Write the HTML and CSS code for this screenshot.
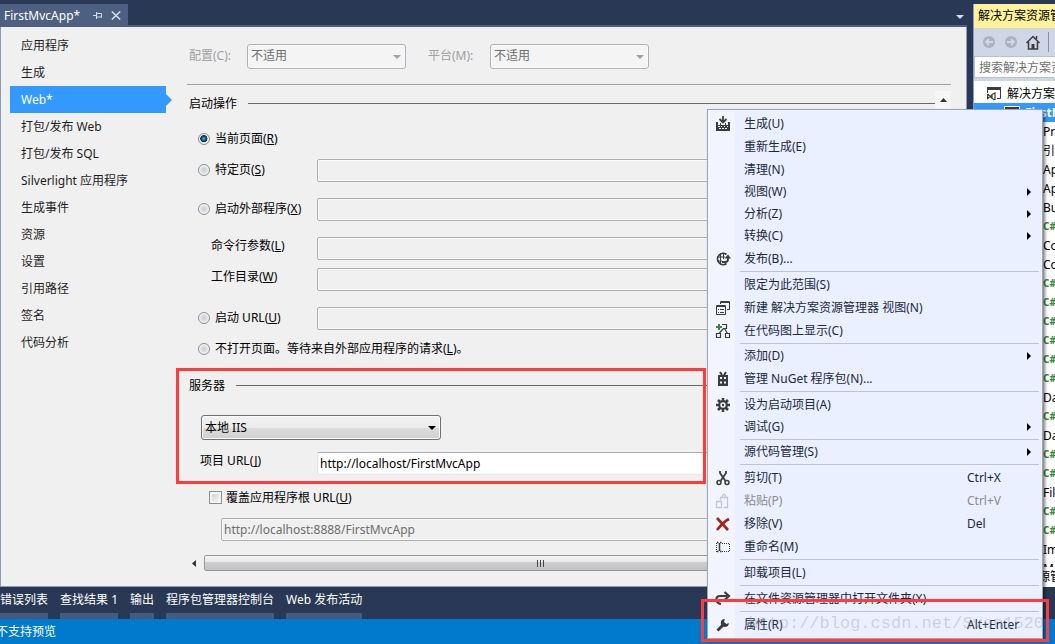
FILE: index.html
```html
<!DOCTYPE html>
<html lang="zh-CN">
<head>
<meta charset="utf-8">
<title>FirstMvcApp</title>
<link rel="stylesheet" href="styles.css">
</head>
<body>
<div class="workspace">
  <main class="document">
    <header class="doc-tabs">
      <div class="doc-tab">
        <span>FirstMvcApp*</span>
        <button class="icon-btn pin" aria-label="固定"><svg width="9" height="7" viewBox="0 0 9 7"><path d="M0 3.500h3M3.500 0v7M4 1.500h4.500v4M4 5h5" fill="none" stroke="#d5dcec"/></svg></button>
        <button class="icon-btn" aria-label="关闭"><svg width="10" height="9" viewBox="0 0 10 9"><path d="M.8.5l8.400 8M9.200.5l-8.400 8" fill="none" stroke="#d5dcec" stroke-width="1.500"/></svg></button>
      </div>
      <button class="icon-btn doc-list" aria-label="文档列表"><svg width="8" height="4" viewBox="0 0 8 4"><path d="M0 0h8L4 4z" fill="#d5dcec"/></svg></button>
    </header>
    <div class="doc-body">
      <nav class="pages">
        <a href="#">应用程序</a>
        <a href="#">生成</a>
        <a href="#" class="current">Web*</a>
        <a href="#">打包/发布 Web</a>
        <a href="#">打包/发布 SQL</a>
        <a href="#">Silverlight 应用程序</a>
        <a href="#">生成事件</a>
        <a href="#">资源</a>
        <a href="#">设置</a>
        <a href="#">引用路径</a>
        <a href="#">签名</a>
        <a href="#">代码分析</a>
      </nav>
      <form class="settings">
        <div class="config">
          <label for="cfg">配置(C):</label>
          <div class="combo off"><select id="cfg" disabled><option>不适用</option></select></div>
          <label for="plat">平台(M):</label>
          <div class="combo off"><select id="plat" disabled><option>不适用</option></select></div>
        </div>
        <div class="scroller">
          <div class="fields">
            <h2>启动操作</h2>
            <div class="row gap-l"><label class="name"><input type="radio" name="start" checked><span>当前页面(<u>R</u>)</span></label></div>
            <div class="row gap-s"><label class="name"><input type="radio" name="start"><span>特定页(<u>S</u>)</span></label><input class="text" disabled aria-label="特定页"></div>
            <div class="row gap-l"><label class="name"><input type="radio" name="start"><span>启动外部程序(<u>X</u>)</span></label><input class="text" disabled aria-label="启动外部程序"></div>
            <div class="row gap-l"><label class="name sub" for="args">命令行参数(<u>L</u>)</label><input class="text" id="args" disabled></div>
            <div class="row gap-s"><label class="name sub" for="dir">工作目录(<u>W</u>)</label><input class="text" id="dir" disabled></div>
            <div class="row gap-l"><label class="name"><input type="radio" name="start"><span>启动 URL(<u>U</u>)</span></label><input class="text" disabled aria-label="启动 URL"></div>
            <div class="row gap-s"><label class="name"><input type="radio" name="start"><span>不打开页面。等待来自外部应用程序的请求(<u>L</u>)。</span></label></div>
            <h2 class="gap-l">服务器</h2>
            <div class="combo server"><select aria-label="服务器"><option>本地 IIS</option></select></div>
            <div class="row gap-m"><label class="name url" for="url">项目 URL(<u>J</u>)</label><input class="text live" id="url" value="http://localhost/FirstMvcApp"></div>
            <div class="row gap-m"><label class="name check"><input type="checkbox"><span>覆盖应用程序根 URL(<u>U</u>)</span></label></div>
            <div class="row gap-s root"><input class="text" disabled value="http://localhost:8888/FirstMvcApp" aria-label="应用程序根 URL"></div>
            <div class="hbar">
              <button type="button" aria-label="向左滚动"><svg width="4" height="7" viewBox="0 0 4 7"><path d="M4 0v7L0 3.500z" fill="#333"/></svg></button>
              <div class="thumb"><i></i><i></i><i></i></div>
            </div>
          </div>
          <div class="vbar"><button type="button" aria-label="向上滚动"><svg width="7" height="4" viewBox="0 0 7 4"><path d="M0 4h7L3.500 0z" fill="#333"/></svg></button></div>
        </div>
      </form>
    </div>
  </main>
  <aside class="explorer">
    <h1>解决方案资源管理器</h1>
    <div class="tools">
      <button class="icon-btn" aria-label="后退"><svg width="14" height="14" viewBox="0 0 14 14"><circle cx="7" cy="7" r="6" fill="#acb1bd"/><path d="M11 7H4M7 4L4 7l3 3" fill="none" stroke="#cfd6e5" stroke-width="1.800"/></svg></button>
      <button class="icon-btn" aria-label="前进"><svg width="14" height="14" viewBox="0 0 14 14"><circle cx="7" cy="7" r="6" fill="#acb1bd"/><path d="M3 7h7M7 4l3 3-3 3" fill="none" stroke="#cfd6e5" stroke-width="1.800"/></svg></button>
      <button class="icon-btn" aria-label="主页"><svg width="14" height="15" viewBox="0 0 14 15"><path d="M.5 8L7 1.500 13.500 8M2.500 7v7h9V7M10.500 4V1" fill="none" stroke="#3c3c3c" stroke-width="1.500"/><path d="M5.500 9h3v5h-3z" fill="#3c3c3c"/></svg></button>
      <span class="divider"></span>
    </div>
    <input class="search" placeholder="搜索解决方案资源管理器" aria-label="搜索解决方案资源管理器">
    <div class="tree">
      <div class="node solution"><svg width="14" height="13" viewBox="0 0 14 13"><path d="M0 0h14v3H0z" fill="#3c3c3c"/><path d="M.5 3v3M13.500 3v8.500H10" fill="none" stroke="#3c3c3c"/><path d="M.6 7v4.500L5 8M.6 7L5 11M5 7.500L8 6v7l-3-1.500z" fill="none" stroke="#3c3c3c" stroke-width="1.200"/></svg><span>解决方案“FirstMvcApp”</span></div>
      <div class="node project"><svg width="16" height="13" viewBox="0 0 16 13"><path d="M.5.5h15v12H.5z" fill="#3c3c3c" stroke="#fff"/></svg><span>FirstMvcApp</span></div>
      <div class="node">Properties</div>
      <div class="node">引用</div>
      <div class="node">App_Data</div>
      <div class="node">App_Start</div>
      <div class="node">BundleConfig</div>
      <div class="node cs">C#</div>
      <div class="node">Content</div>
      <div class="node">Controllers</div>
      <div class="node cs">C#</div>
      <div class="node cs">C#</div>
      <div class="node cs">C#</div>
      <div class="node cs">C#</div>
      <div class="node cs">C#</div>
      <div class="node cs">C#</div>
      <div class="node">Data</div>
      <div class="node cs">C#</div>
      <div class="node">Data</div>
      <div class="node cs">C#</div>
      <div class="node cs">C#</div>
      <div class="node">Filters</div>
      <div class="node cs">C#</div>
      <div class="node cs">C#</div>
      <div class="node">Images</div>
      <div class="node">Models</div>
    </div>
    <div class="panel-tab">解决方案资源管理器</div>
  </aside>
</div>
<nav class="dock">
  <button>错误列表</button><button>查找结果 1</button><button>输出</button><button>程序包管理器控制台</button><button>Web 发布活动</button>
</nav>
<footer class="status">不支持预览</footer>

<div class="menu" role="menu">
  <button class="item"><svg viewBox="0 0 16 16"><path d="M1 6h2v3h2V7h1v2h4V7h1v2h2V6h2v9H1z" fill="#3c3c3c"/><path d="M3 10h2v1H3zM6 10h1v1H6zM9 10h1v1H9zM12 10h1v1h-1zM4 12h2v1H4zM7 12h2v1H7zM10 12h2v1h-2z" fill="#f2f4ff"/><path d="M8 0v5M4.500 3L8 6.500 11.500 3" fill="none" stroke="#3c3c3c" stroke-width="1.800"/></svg><span>生成(U)</span></button>
  <button class="item"><svg></svg><span>重新生成(E)</span></button>
  <button class="item"><svg></svg><span>清理(N)</span></button>
  <button class="item more"><svg></svg><span>视图(W)</span></button>
  <button class="item more"><svg></svg><span>分析(Z)</span></button>
  <button class="item more"><svg></svg><span>转换(C)</span></button>
  <button class="item"><svg viewBox="0 0 16 16"><path d="M11.500 3.500A5.600 5.600 0 1 0 11.500 12.500" fill="none" stroke="#3c3c3c" stroke-width="1.800"/><path d="M2 6h8M2 10h5M5.500 2.500v11M8.500 2.500V8" fill="none" stroke="#3c3c3c"/><path d="M7 11h3.500c2 0 2.500-1 2.500-3V6" fill="none" stroke="#3c3c3c" stroke-width="1.800"/><path d="M9.500 7.500L13 3.500l3 4z" fill="#3c3c3c"/></svg><span>发布(B)...</span></button>
  <hr>
  <button class="item"><svg></svg><span>限定为此范围(S)</span></button>
  <button class="item"><svg viewBox="0 0 16 16"><path d="M5.500 4V1.500h9v8H12M5 2.500h10M1.500 5.500h9v9h-9zM1 6.500h10" fill="none" stroke="#3c3c3c"/><path d="M3 9.500h1M5 9.500h4M3 12.500h1M5 12.500h4" stroke="#3c3c3c"/></svg><span>新建 解决方案资源管理器 视图(N)</span></button>
  <button class="item"><svg viewBox="0 0 16 16"><path d="M4 1v6M1 4h6" stroke="#388a34" stroke-width="2"/><path d="M7 1.500h4.500v4H8M8.500 5.500L4 10.500M9.500 5.500l3 5M1.500 10.500h4v4h-4zM10.500 10.500h4v4h-4z" fill="none" stroke="#3c3c3c" stroke-width="1.200"/></svg><span>在代码图上显示(C)</span></button>
  <hr>
  <button class="item more"><svg></svg><span>添加(D)</span></button>
  <button class="item"><svg viewBox="0 0 16 16"><path d="M3 4h10v11H3z" fill="#3c3c3c"/><path d="M5 1l2 3M11 1L9 4" stroke="#3c3c3c" stroke-width="2"/><path d="M5 6h2v2H5zM9 6h2v2H9zM5 10.500h2v2H5zM9 10.500h2v2H9z" fill="#f2f4ff"/></svg><span>管理 NuGet 程序包(N)...</span></button>
  <hr>
  <button class="item"><svg viewBox="0 0 16 16"><path d="M8 1v14M1 8h14M3 3l10 10M13 3L3 13" stroke="#3c3c3c" stroke-width="2.500"/><circle cx="8" cy="8" r="3.800" fill="#f2f4ff" stroke="#3c3c3c" stroke-width="2.200"/><circle cx="8" cy="8" r="1.200" fill="#3c3c3c"/></svg><span>设为启动项目(A)</span></button>
  <button class="item more"><svg></svg><span>调试(G)</span></button>
  <hr>
  <button class="item more"><svg></svg><span>源代码管理(S)</span></button>
  <hr>
  <button class="item"><svg viewBox="0 0 16 16"><path d="M5 1v2l5.500 8M11 1v2l-5.500 8" fill="none" stroke="#3c3c3c" stroke-width="1.800"/><circle cx="4" cy="12.500" r="2" fill="none" stroke="#3c3c3c" stroke-width="1.500"/><circle cx="12" cy="12.500" r="2" fill="none" stroke="#3c3c3c" stroke-width="1.500"/></svg><span>剪切(T)</span><kbd>Ctrl+X</kbd></button>
  <button class="item" disabled><svg viewBox="0 0 16 16"><path d="M5.500 7V4.500h7v10h-4M7.500 4V2.500l1-1h1l1 1V4M1.500 8.500h5v6h-5z" fill="none" stroke="#c3c7d2" stroke-width="1.300"/></svg><span>粘贴(P)</span><kbd>Ctrl+V</kbd></button>
  <button class="item"><svg viewBox="0 0 16 16"><path d="M2 2l11 12M14 3C10 5 6 9 2 14" fill="none" stroke="#a1260d" stroke-width="2.600"/></svg><span>移除(V)</span><kbd>Del</kbd></button>
  <button class="item"><svg viewBox="0 0 16 16"><path d="M2 3.500h1.500M5 3.500h1.500M2 12.500h1.500M5 12.500h1.500M4.500 4v8" stroke="#3c3c3c" stroke-width="1.600"/><path d="M1.500 4v9M7 4.500h8M7 12.500h8M14.500 5v8" fill="none" stroke="#3c3c3c" stroke-dasharray="1 1"/></svg><span>重命名(M)</span></button>
  <hr>
  <button class="item"><svg></svg><span>卸载项目(L)</span></button>
  <hr>
  <button class="item"><svg viewBox="0 0 16 16"><path d="M6 13C0 12 0 5 5 5h7M9.500 1L14 5l-4.500 4" fill="none" stroke="#3c3c3c" stroke-width="2.200"/></svg><span>在文件资源管理器中打开文件夹(X)</span></button>
  <hr>
  <button class="item"><svg viewBox="0 0 16 16"><path d="M2.500 13.500L9 7" stroke="#3c3c3c" stroke-width="3"/><path d="M13.800 5a4 4 0 1 1-4-4L9 4l2.500 2z" transform="translate(0 1)" fill="#3c3c3c"/></svg><span>属性(R)</span><kbd>Alt+Enter</kbd></button>
</div>
<div class="mark mark-server"></div>
<div class="mark mark-props"></div>
<div class="watermark">http://blog.csdn.net/Sven1520</div>
</body>
</html>
```
FILE: styles.css
```css
* { box-sizing: border-box; }
body {
  margin: 0;
  height: 100vh;
  display: flex;
  flex-direction: column;
  overflow: hidden;
  position: relative;
  background: #293955;
  color: #1e1e1e;
  font: 12px/16px "Noto Sans", "Noto Sans CJK SC", sans-serif;
}
button, input, select { font: inherit; color: inherit; margin: 0; }
button { border: 0; background: none; padding: 0; }
u { text-decoration-skip-ink: none; }
.icon-btn { display: flex; align-items: center; }
svg { display: block; flex: none; }

.workspace { flex: 1; min-height: 0; display: flex; gap: 6px; }
.document { flex: 1; min-width: 0; display: flex; flex-direction: column; }
.doc-tabs {
  flex: none;
  display: flex;
  align-items: flex-end;
  justify-content: space-between;
  height: 27px;
  border-bottom: 2px solid #4d6082;
}
.doc-tab {
  display: flex;
  align-items: center;
  gap: 9px;
  width: 128px;
  height: 21px;
  padding: 2px 7px 0 4px;
  background: #4d6082;
  color: #fff;
}
.doc-tab .pin { margin-left: auto; }
.doc-list { padding: 0 3px 6px; }
.doc-body {
  flex: 1;
  min-height: 0;
  display: flex;
  overflow: hidden;
  border: solid #8e9bbc;
  border-width: 0 1px 1px;
  background: #f0f0f0;
}

.pages { flex: none; width: 156px; margin: 5px 0 0 9px; }
.pages a {
  position: relative;
  display: block;
  padding-left: 11px;
  line-height: 27px;
  color: #1e1e1e;
  text-decoration: none;
}
.pages .current { background: #3399ff; color: #fff; }
.pages .current::after {
  content: "";
  position: absolute;
  left: 100%;
  top: 8px;
  border: solid transparent;
  border-width: 6px 0 6px 6px;
  border-left-color: #3399ff;
}

.settings { flex: 1; min-width: 0; margin: 0 15px 0 21px; }
.config {
  display: flex;
  align-items: center;
  height: 58px;
  padding: 1px 0 0 2px;
  border-bottom: 1px solid #a0a0a0;
  color: #a0a0a0;
}
.config label { width: 58px; }
.config .combo + label { margin-left: 22px; width: 62px; }
.combo { position: relative; width: 159px; height: 25px; color: #000; }
.combo select {
  appearance: none;
  width: 100%;
  height: 100%;
  padding: 0 3px;
  border: 1px solid #707070;
  border-radius: 3px;
  background: linear-gradient(#f2f2f2, #ebebeb 50%, #dddddd 50%, #cfcfcf);
  box-shadow: inset 0 0 0 1px #fafafa;
}
.combo::after {
  content: "";
  position: absolute;
  right: 5px;
  top: 11px;
  border: solid transparent;
  border-width: 4px 4px 0;
  border-top-color: #000;
}
.combo.off select { border-color: #adb2b5; background: #f4f4f4; color: #6d6d6d; opacity: 1; }
.combo.off::after { border-top-color: #a0a0a0; }
.combo.server { width: 240px; margin: 18px 0 0 14px; }

.scroller { display: flex; padding-top: 6px; }
.fields { flex: 1; min-width: 0; }
.vbar { width: 16px; }
.vbar button { display: flex; align-items: center; justify-content: center; width: 16px; height: 18px; background: #f6f6f6; }
h2 {
  display: flex;
  align-items: center;
  gap: 11px;
  height: 23px;
  margin: 1px 0 0;
  padding-left: 2px;
  color: #000;
  font-size: 12px;
  font-weight: 400;
}
h2::after { content: ""; flex: 1; border-top: 1px solid #696969; }
.row { display: flex; align-items: center; height: 23px; }
.gap-s { margin-top: 8px; }
.gap-m { margin-top: 12px; }
.gap-l { margin-top: 16px; }
h2 + .gap-l, h2.gap-l { margin-top: 13px; }
.name {
  flex: none;
  display: flex;
  align-items: center;
  gap: 5px;
  width: 130px;
  padding: 0 0 2px 11px;
  color: #000;
  white-space: nowrap;
}
.name.sub { display: block; padding: 0 0 6px 24px; }
.name.url { display: block; padding: 0 0 6px 13px; }
.name.check { gap: 4px; padding-left: 22px; }
.name input { appearance: none; flex: none; width: 12px; height: 12px; }
.name input[type="radio"] {
  border: 1px solid #8e8f8f;
  border-radius: 50%;
  background: radial-gradient(#c8cdd2, #e8eaec 60%, #fafafa);
  box-shadow: inset 0 0 0 1px #f4f4f4;
}
.name input[type="radio"]:checked { background: radial-gradient(circle at 48% 46%, #5cc5e8, #135985 25%, #0b2a41 44%, #d9dde0 52%); }
.name input[type="checkbox"] {
  width: 13px;
  height: 13px;
  border: 1px solid #8e8f8f;
  background: linear-gradient(135deg, #cbcfd5, #f6f6f6);
  box-shadow: inset 0 0 0 2px #f4f4f4;
}
.text {
  flex: 1;
  min-width: 0;
  height: 23px;
  padding: 0 2px;
  border: 1px solid #afafaf;
  border-radius: 2px;
  background: #f0f0f0;
  box-shadow: inset 0 0 0 1px #fafafa;
  color: #6d6d6d;
}
.text.live { border-color: #abadb3 #e2e3ea #e3e9ef; background: #fff; color: #000; }
.root { padding-left: 34px; }
.hbar { display: flex; height: 16px; margin-top: 14px; }
.hbar button { display: flex; align-items: center; justify-content: center; width: 17px; padding-right: 3px; }
.thumb {
  display: flex;
  align-items: center;
  justify-content: center;
  gap: 2px;
  width: 90%;
  border: 1px solid #979797;
  border-radius: 2px;
  background: linear-gradient(#f4f4f4, #e8e8e8 45%, #cfcfd1 45%, #c2c2c5);
}
.thumb i { width: 1px; height: 7px; background: #444; }

.explorer {
  flex: none;
  display: flex;
  flex-direction: column;
  width: 82px;
  margin-top: 4px;
  overflow: hidden;
  border-left: 1px solid #8e9bbc;
  background: #cfd6e5;
  white-space: nowrap;
}
.explorer h1 { flex: none; margin: 0; padding-left: 4px; background: #fff29d; color: #000; font-size: 12px; font-weight: 400; line-height: 24px; }
.tools { flex: none; display: flex; align-items: center; gap: 8px; height: 28px; padding-left: 8px; }
.divider { width: 1px; height: 20px; background: #8591a8; }
.search { flex: none; width: 200px; height: 22px; padding: 0 4px; border: 1px solid #b8c1d4; background: #fff; }
.search::placeholder { color: #717171; }
.tree { flex: 1; min-height: 0; margin-top: 3px; padding-top: 3px; overflow: hidden; background: #fff; }
.node { height: 19px; padding-left: 69px; color: #000; line-height: 19px; }
.solution, .project { display: flex; align-items: center; gap: 6px; padding-left: 13px; }
.project { gap: 5px; padding-left: 30px; background: #3399ff; color: #fff; font-weight: 700; }
.cs { color: #388a34; font-size: 10px; font-weight: 700; }
.panel-tab { flex: none; padding-left: 4px; background: #fff; color: #000; line-height: 20px; }

.dock { flex: none; display: flex; gap: 12px; height: 32px; }
.dock button { height: 32px; border-bottom: 6px solid #465a7d; color: #fff; white-space: nowrap; }
.status { flex: none; height: 25px; background: #007acc; color: #fff; line-height: 25px; text-indent: -4px; }

.menu {
  position: absolute;
  top: 109px;
  right: 12px;
  width: 336px;
  padding: 2px 0;
  border: 1px solid #9ba7b7;
  background: linear-gradient(90deg, #f2f4ff 27px, #eaf0ff 27px);
  box-shadow: 2px 2px 3px rgba(0, 0, 0, .5);
}
.item {
  display: grid;
  grid-template-columns: 16px 1fr 75px;
  align-items: center;
  column-gap: 13px;
  width: 100%;
  height: 23px;
  padding: 0 0 0 7px;
  color: #1b293e;
  text-align: left;
  white-space: nowrap;
}
.item svg { width: 16px; height: 16px; }
.item kbd { font: inherit; }
.item:disabled { color: #8b8b8b; }
.item.more { height: 22px; }
.item.more::after {
  content: "";
  justify-self: end;
  margin-right: 11px;
  border: solid transparent;
  border-width: 4px 0 4px 4px;
  border-left-color: #000;
}
.menu hr { margin: 1px 3px 1px 32px; border: 0; border-top: 1px solid #bec3cf; }

.mark { position: absolute; border: 3px solid #ff3b3b; pointer-events: none; }
.mark-server { left: 176px; top: 368px; right: 349px; height: 116px; }
.mark-props { right: 6px; top: 599px; width: 348px; height: 43px; }
.watermark {
  position: absolute;
  right: 11px;
  top: 612px;
  color: rgba(150, 150, 150, .36);
  font: 17px/24px "Liberation Mono", monospace;
  pointer-events: none;
}
```
